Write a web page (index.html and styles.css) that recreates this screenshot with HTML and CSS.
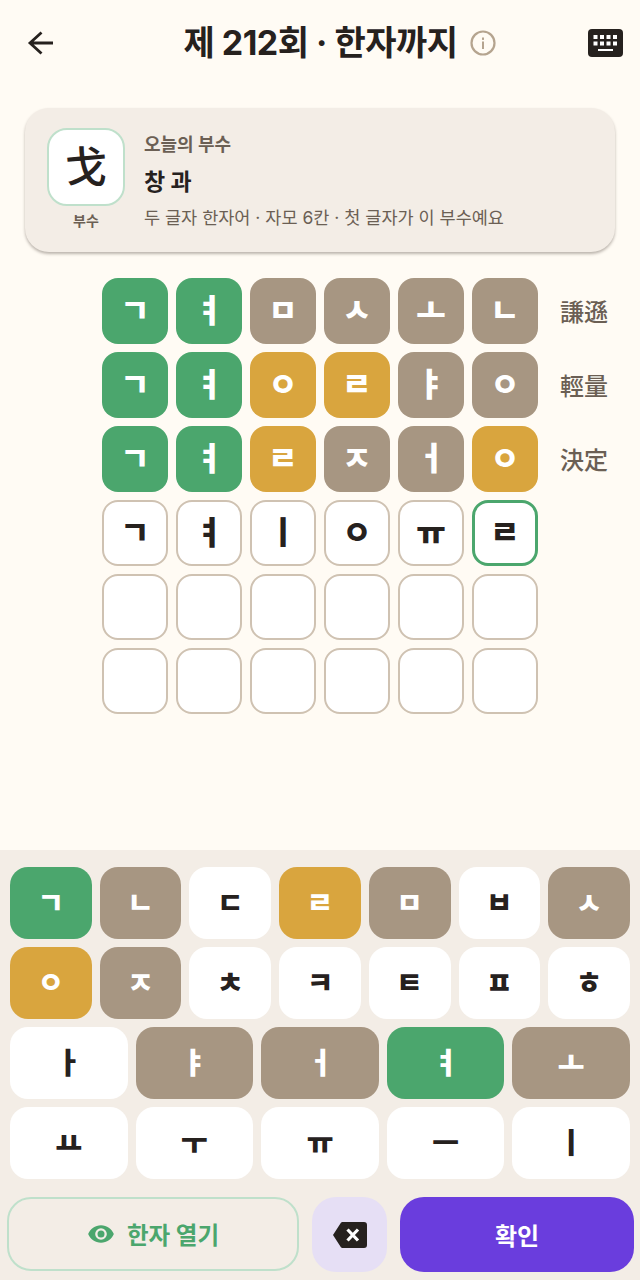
FILE: index.html
```html
<!DOCTYPE html>
<html lang="ko">
<head>
    <meta charset="UTF-8">
    <title>제 212회 · 한자까지</title>
    <meta name="viewport" content="width=device-width, initial-scale=1.0">
    <link rel="stylesheet" href="styles.css">
</head>
<body>
    <div class="app">
        <header class="topbar">
            <svg class="back-icon" viewBox="0 0 32 32" width="32" height="32"><path d="M28 16H5M16.500 5.500 5 16l11.500 10.500" fill="none" stroke="#26211e" stroke-width="2.800"/></svg>
            <div class="title-wrap">
                <h1 class="title">제 212회 · 한자까지</h1>
                <svg class="info-icon" viewBox="0 0 26 26" width="26" height="26"><circle cx="13" cy="13" r="11.500" fill="none" stroke="#b5a48f" stroke-width="2.200"/><rect x="12" y="11.500" width="2" height="7.500" fill="#b5a48f"/><rect x="12" y="7.500" width="2" height="2.400" fill="#b5a48f"/></svg>
            </div>
            <svg class="kb-icon" viewBox="0 0 35 28" width="35" height="28">
                <rect width="35" height="28" rx="4" fill="#26211e"/>
                <path d="M5.500 6h4v4h-4zM12 6h4v4h-4zM18.500 6h4v4h-4zM25 6h4v4h-4zM5.500 12.500h4v4h-4zM12 12.500h4v4h-4zM18.500 12.500h4v4h-4zM25 12.500h4v4h-4zM10 20h15v2H10z" fill="#fff"/>
            </svg>
        </header>

        <section class="radical-card">
            <div class="radical-side">
                <div class="radical-box">戈</div>
                <div class="radical-tag">부수</div>
            </div>
            <div class="radical-info">
                <div class="radical-label">오늘의 부수</div>
                <div class="radical-name">창 과</div>
                <div class="radical-hint">두 글자 한자어 · 자모 6칸 · 첫 글자가 이 부수예요</div>
            </div>
        </section>

        <section class="board">
            <div class="board-row">
                <div class="tile hit">ㄱ</div><div class="tile hit">ㅕ</div><div class="tile miss">ㅁ</div><div class="tile miss">ㅅ</div><div class="tile miss">ㅗ</div><div class="tile miss">ㄴ</div>
                <div class="hanja">謙遜</div>
            </div>
            <div class="board-row">
                <div class="tile hit">ㄱ</div><div class="tile hit">ㅕ</div><div class="tile near">ㅇ</div><div class="tile near">ㄹ</div><div class="tile miss">ㅑ</div><div class="tile miss">ㅇ</div>
                <div class="hanja">輕量</div>
            </div>
            <div class="board-row">
                <div class="tile hit">ㄱ</div><div class="tile hit">ㅕ</div><div class="tile near">ㄹ</div><div class="tile miss">ㅈ</div><div class="tile miss">ㅓ</div><div class="tile near">ㅇ</div>
                <div class="hanja">決定</div>
            </div>
            <div class="board-row">
                <div class="tile">ㄱ</div><div class="tile">ㅕ</div><div class="tile">ㅣ</div><div class="tile">ㅇ</div><div class="tile">ㅠ</div><div class="tile current">ㄹ</div>
            </div>
            <div class="board-row">
                <div class="tile"></div><div class="tile"></div><div class="tile"></div><div class="tile"></div><div class="tile"></div><div class="tile"></div>
            </div>
            <div class="board-row">
                <div class="tile"></div><div class="tile"></div><div class="tile"></div><div class="tile"></div><div class="tile"></div><div class="tile"></div>
            </div>
        </section>

        <section class="keyboard">
            <div class="key-row seven">
                <div class="key hit">ㄱ</div><div class="key miss">ㄴ</div><div class="key">ㄷ</div><div class="key near">ㄹ</div><div class="key miss">ㅁ</div><div class="key">ㅂ</div><div class="key miss">ㅅ</div>
            </div>
            <div class="key-row seven">
                <div class="key near">ㅇ</div><div class="key miss">ㅈ</div><div class="key">ㅊ</div><div class="key">ㅋ</div><div class="key">ㅌ</div><div class="key">ㅍ</div><div class="key">ㅎ</div>
            </div>
            <div class="key-row five">
                <div class="key">ㅏ</div><div class="key miss">ㅑ</div><div class="key miss">ㅓ</div><div class="key hit">ㅕ</div><div class="key miss">ㅗ</div>
            </div>
            <div class="key-row five">
                <div class="key">ㅛ</div><div class="key">ㅜ</div><div class="key">ㅠ</div><div class="key">ㅡ</div><div class="key">ㅣ</div>
            </div>
            <div class="actions">
                <div class="btn-reveal">
                    <svg viewBox="0 0 24 24" width="28" height="28"><path fill="#4ba66d" d="M12 4.500C7 4.500 2.700 7.600 1 12c1.700 4.400 6 7.500 11 7.500s9.300-3.100 11-7.500c-1.700-4.400-6-7.500-11-7.500zM12 17a5 5 0 1 1 0-10 5 5 0 0 1 0 10zm0-8a3 3 0 1 0 0 6 3 3 0 0 0 0-6z"/></svg>
                    <span>한자 열기</span>
                </div>
                <div class="btn-delete">
                    <svg viewBox="0 0 36 28" width="36" height="28"><path fill="#26211e" d="M10.500 1H32a3 3 0 0 1 3 3v20a3 3 0 0 1-3 3H10.500a2 2 0 0 1-1.600-.8L1 14 8.900 1.800a2 2 0 0 1 1.600-.8z"/><path d="M15.500 8.500 26 19.500M26 8.500 15.500 19.500" stroke="#fff" stroke-width="3.200" fill="none"/></svg>
                </div>
                <div class="btn-confirm">확인</div>
            </div>
        </section>
    </div>
</body>
</html>
```

FILE: styles.css
```css
* {
    box-sizing: border-box;
}
body {
    font-family: Inter, "Noto Sans CJK KR", "Noto Sans", sans-serif;
    margin: 0;
    padding: 0;
    background: #fffbf4;
    color: #26211e;
}
.app {
    width: 640px;
    height: 1280px;
    display: flex;
    flex-direction: column;
    overflow: hidden;
}
.topbar {
    display: flex;
    align-items: center;
    justify-content: space-between;
    height: 28px;
    margin-top: 29px;
    padding: 0 17px 0 25px;
}
.title-wrap {
    display: flex;
    align-items: center;
    gap: 12px;
    margin-left: 34px;
}
.title {
    margin: 0;
    font-size: 34px;
    font-weight: 700;
    line-height: 28px;
    letter-spacing: -0.5px;
}
.radical-card {
    display: flex;
    gap: 19px;
    height: 144px;
    margin: 51px 25px 0;
    padding: 20px 22px;
    background: #f3ede6;
    border-radius: 24px;
    box-shadow: 0 2px 3px rgba(60, 50, 40, 0.35);
}
.radical-side {
    display: flex;
    flex-direction: column;
    align-items: center;
}
.radical-box {
    width: 78px;
    height: 78px;
    display: flex;
    align-items: center;
    justify-content: center;
    background: #fff;
    border: 2px solid #bfe0cb;
    border-radius: 20px;
    font-size: 42px;
    font-weight: 500;
    line-height: 1;
}
.radical-tag {
    margin-top: 5px;
    font-size: 14px;
    font-weight: 700;
    line-height: 20px;
    color: #6b5f54;
}
.radical-info {
    padding-top: 5px;
}
.radical-label {
    font-size: 18px;
    font-weight: 700;
    line-height: 24px;
    color: #6b5f54;
}
.radical-name {
    margin-top: 10px;
    font-size: 23px;
    font-weight: 700;
    line-height: 30px;
}
.radical-hint {
    margin-top: 9px;
    font-size: 17.500px;
    line-height: 24px;
    color: #6b5f54;
}
.board {
    display: flex;
    flex-direction: column;
    gap: 8px;
    margin-top: 26px;
    padding-left: 102px;
    flex: 1;
}
.board-row {
    display: flex;
    align-items: center;
    gap: 8px;
}
.tile {
    width: 66px;
    height: 66px;
    display: flex;
    align-items: center;
    justify-content: center;
    background: #fff;
    border: 2px solid #cfc2b2;
    border-radius: 16px;
    font-size: 32px;
    font-weight: 900;
    line-height: 1;
}
.tile.hit,
.tile.near,
.tile.miss {
    border: 0;
    color: #fff;
}
.hit {
    background: #4ba66d;
}
.near {
    background: #d9a53e;
}
.miss {
    background: #a79682;
}
.tile.current {
    border: 3px solid #4ba66d;
}
.hanja {
    margin-left: 14px;
    margin-top: -2px;
    font-size: 24px;
    font-weight: 500;
    color: #6b5f54;
}
.keyboard {
    height: 430px;
    padding: 17px 10px 0;
    background: #f3ede6;
    display: flex;
    flex-direction: column;
    gap: 8px;
}
.key-row {
    display: grid;
    gap: 8px;
}
.seven {
    grid-template-columns: repeat(7, 1fr);
}
.five {
    grid-template-columns: repeat(5, 1fr);
}
.key {
    height: 72px;
    display: flex;
    align-items: center;
    justify-content: center;
    background: #fff;
    border-radius: 18px;
    font-size: 29px;
    font-weight: 900;
    line-height: 1;
}
.key.hit,
.key.near,
.key.miss {
    color: #fff;
}
.key.hit {
    background: #4ba66d;
}
.key.near {
    background: #d9a53e;
}
.key.miss {
    background: #a79682;
}
.actions {
    display: flex;
    margin: 10px -3px 0;
}
.btn-reveal {
    flex: none;
    width: 292px;
    height: 74px;
    display: flex;
    align-items: center;
    justify-content: center;
    gap: 12px;
    border: 2px solid #bfe0cb;
    border-radius: 24px;
    color: #4ba66d;
    font-size: 23.500px;
    font-weight: 700;
}
.btn-delete {
    flex: none;
    width: 75px;
    height: 75px;
    margin-left: 13px;
    display: flex;
    align-items: center;
    justify-content: center;
    background: #e6dff5;
    border-radius: 24px;
}
.btn-confirm {
    flex: none;
    width: 234px;
    height: 75px;
    margin-left: 13px;
    display: flex;
    align-items: center;
    justify-content: center;
    background: #6a3ddd;
    border-radius: 24px;
    color: #fff;
    font-size: 24px;
    font-weight: 700;
}
```
